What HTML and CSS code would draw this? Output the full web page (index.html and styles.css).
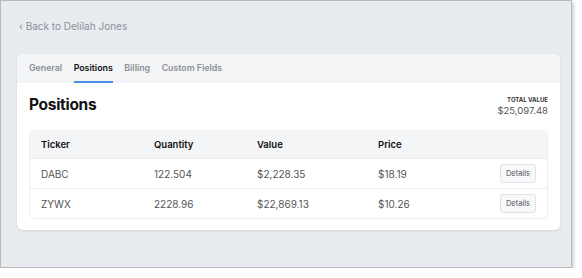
FILE: index.html
```html
<!DOCTYPE html>
<html lang="en">
<head>
  <meta charset="UTF-8" />
  <title>Positions</title>
  <link rel="stylesheet" href="styles.css">
</head>
<body>

<div class="frame">
  <a class="back-link" href="#">&lsaquo; Back to Delilah Jones</a>

  <div class="card">
    <div class="tabs">
      <span class="tab">General</span>
      <span class="tab active">Positions</span>
      <span class="tab">Billing</span>
      <span class="tab">Custom Fields</span>
    </div>

    <div class="card-body">
      <div class="heading-row">
        <h1>Positions</h1>
        <div class="total">
          <div class="total-label">TOTAL VALUE</div>
          <div class="total-value">$25,097.48</div>
        </div>
      </div>

      <div class="table-box">
        <div class="row head">
          <span>Ticker</span>
          <span>Quantity</span>
          <span>Value</span>
          <span>Price</span>
          <span></span>
        </div>
        <div class="row">
          <span>DABC</span>
          <span>122.504</span>
          <span>$2,228.35</span>
          <span>$18.19</span>
          <span class="actions"><button class="details-btn">Details</button></span>
        </div>
        <div class="row">
          <span>ZYWX</span>
          <span>2228.96</span>
          <span>$22,869.13</span>
          <span>$10.26</span>
          <span class="actions"><button class="details-btn">Details</button></span>
        </div>
      </div>
    </div>
  </div>
</div>

</body>
</html>
```

FILE: styles.css
```css
body {
  margin: 0;
  background: #ffffff;
  font-family: Inter, "Liberation Sans", sans-serif;
}
.frame {
  width: 572px;
  height: 268px;
  background: #e8ecf0;
  border: 1px solid #b9b9b9;
  box-shadow: 2px 2px 3px rgba(0,0,0,0.18);
  padding: 0 11px 0 16px;
  box-sizing: border-box;
}
.back-link {
  display: block;
  padding: 19px 0 0 2px;
  height: 53px;
  box-sizing: border-box;
  font-size: 10px;
  color: #8a909a;
  text-decoration: none;
}
.card {
  background: white;
  border-radius: 6px;
  box-shadow: 0 1px 3px rgba(0,0,0,0.1);
  overflow: hidden;
}
.tabs {
  display: flex;
  gap: 11.5px;
  background: #f3f4f6;
  padding: 0 12px;
  height: 29px;
}
.tab {
  font-size: 8.8px;
  font-weight: 600;
  color: #8b9099;
  line-height: 27px;
  border-bottom: 2px solid transparent;
}
.tab.active {
  color: #111;
  border-bottom-color: #4a90e2;
}
.card-body {
  padding: 12px 12px 11px 12px;
}
.heading-row {
  display: flex;
  justify-content: space-between;
  align-items: flex-start;
  height: 35px;
}
h1 {
  margin: 0;
  font-size: 15.5px;
  letter-spacing: -0.3px;
  line-height: 20px;
  font-weight: 700;
  color: #111;
}
.total {
  text-align: right;
  padding-top: 1px;
}
.total-label {
  font-size: 6px;
  font-weight: 700;
  color: #333;
}
.total-value {
  font-size: 9.5px;
  color: #555;
  margin-top: 2px;
}
.table-box {
  border: 1px solid #eceef1;
  border-radius: 5px;
  overflow: hidden;
}
.row {
  display: grid;
  grid-template-columns: 113px 103px 121px 1fr 60px;
  align-items: center;
  height: 29px;
  padding: 0 11px;
  font-size: 10px;
  color: #555;
  border-top: 1px solid #eceef1;
}
.row.head {
  border-top: none;
  height: 27px;
  background: #f4f5f7;
  font-weight: 600;
  color: #111;
  font-size: 9.5px;
}
.actions {
  text-align: right;
}
.details-btn {
  font-family: inherit;
  font-size: 7.5px;
  color: #555;
  background: #f7f8fa;
  border: 1px solid #dfe2e6;
  border-radius: 3px;
  width: 36px;
  height: 19px;
  padding: 0;
}
```
